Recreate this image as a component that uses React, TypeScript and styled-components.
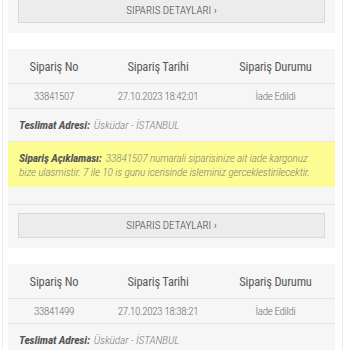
import React from "react";
import styled, { createGlobalStyle } from "styled-components";

const GlobalStyle = createGlobalStyle`
  html, body {
    margin: 0;
    padding: 0;
    background: #ffffff;
  }
  body {
    font-family: "Roboto Condensed", "Liberation Sans Narrow", "Roboto", sans-serif;
    overflow: hidden;
  }
`;

const Page = styled.div`
  width: 341px;
  margin-left: 2px;
  margin-top: -10px;
  padding: 0 7px 0 5px;
  box-sizing: border-box;
  border-left: 1px solid #ececec;
  border-right: 1px solid #ececec;
  display: flex;
  flex-direction: column;
  gap: 16px;
`;

const OrderBlock = styled.div`
  background: #f6f6f6;
  display: flex;
  flex-direction: column;
`;

const TableGrid = styled.div`
  display: grid;
  grid-template-columns: 92px 116px 1fr;
`;

const HeadCell = styled.div`
  height: 35px;
  display: flex;
  align-items: center;
  justify-content: center;
  padding-top: 1px;
  box-sizing: border-box;
  font-size: 12.5px;
  color: #5a5a5a;
  letter-spacing: -0.2px;
  border-bottom: 1px solid #e6e6e6;
`;

const ValueCell = styled.div`
  height: 24px;
  display: flex;
  align-items: center;
  justify-content: center;
  font-size: 11px;
  font-weight: 300;
  color: #6f6f6f;
  border-bottom: 1px solid #e6e6e6;
  letter-spacing: -0.35px;
`;

const AddressRow = styled.div`
  height: 32px;
  display: flex;
  align-items: center;
  padding-left: 11px;
  font-size: 11.5px;
  font-weight: 300;
  font-style: italic;
  color: #808080;
  letter-spacing: -0.15px;
  border-bottom: 1px solid #e6e6e6;
`;

const Label = styled.b`
  font-weight: 700;
  color: #555555;
  margin-right: 4px;
`;

const NoteArea = styled.div`
  padding-bottom: 17px;
  border-bottom: 1px solid #e6e6e6;
`;

const NoteBox = styled.div`
  background: #fcfc93;
  padding: 9px 10px 8px 11px;
  font-size: 11.5px;
  font-weight: 300;
  line-height: 14px;
  font-style: italic;
  letter-spacing: -0.2px;
  color: #86866e;
`;

const ButtonArea = styled.div`
  padding: 8px 10px 10px;
`;

const DetailButton = styled.button`
  display: block;
  width: 100%;
  height: 25px;
  background: #ececec;
  border: 1px solid #d8d8d8;
  font-family: inherit;
  font-size: 11px;
  font-weight: 300;
  color: #444444;
  text-transform: uppercase;
  padding: 0;
  cursor: pointer;
`;

type Order = {
  no: string;
  date: string;
  status: string;
  note?: string;
};

const orders: Order[] = [
  {
    no: "33841507",
    date: "27.10.2023 18:42:01",
    status: "İade Edildi",
    note:
      "33841507 numarali siparisinize ait iade kargonuz bize ulasmistir. 7 ile 10 is gunu icerisinde isleminiz gerceklestirilecektir.",
  },
  {
    no: "33841499",
    date: "27.10.2023 18:38:21",
    status: "İade Edildi",
  },
];

const OrderCard = ({ order }: { order: Order }) => (
  <OrderBlock>
    <TableGrid>
      <HeadCell>Sipariş No</HeadCell>
      <HeadCell>Sipariş Tarihi</HeadCell>
      <HeadCell>Sipariş Durumu</HeadCell>
      <ValueCell>{order.no}</ValueCell>
      <ValueCell>{order.date}</ValueCell>
      <ValueCell>{order.status}</ValueCell>
    </TableGrid>
    <AddressRow>
      <Label>Teslimat Adresi:</Label>Üsküdar - İSTANBUL
    </AddressRow>
    {order.note && (
      <NoteArea>
        <NoteBox>
          <Label>Sipariş Açıklaması:</Label>
          {order.note}
        </NoteBox>
      </NoteArea>
    )}
    <ButtonArea>
      <DetailButton>Siparis Detaylari ›</DetailButton>
    </ButtonArea>
  </OrderBlock>
);

export default function App() {
  return (
    <>
      <GlobalStyle />
      <Page>
        <OrderBlock>
          <ButtonArea>
            <DetailButton>Siparis Detaylari ›</DetailButton>
          </ButtonArea>
        </OrderBlock>
        {orders.map((o) => (
          <OrderCard key={o.no} order={o} />
        ))}
      </Page>
    </>
  );
}
